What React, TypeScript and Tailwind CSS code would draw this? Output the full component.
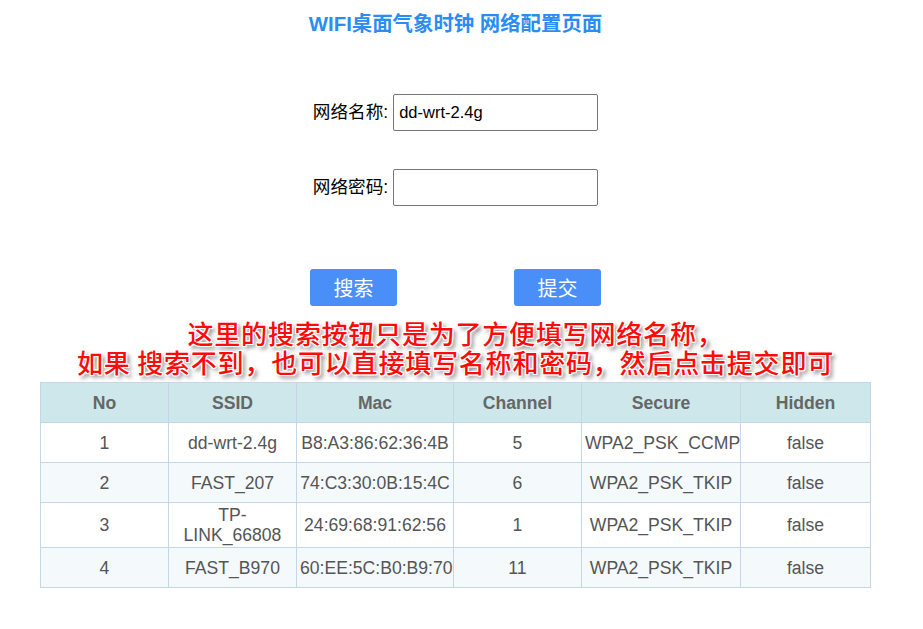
import React from "react";

const rows = [
  { no: "1", ssid: "dd-wrt-2.4g", mac: "B8:A3:86:62:36:4B", ch: "5", sec: "WPA2_PSK_CCMP", hid: "false" },
  { no: "2", ssid: "FAST_207", mac: "74:C3:30:0B:15:4C", ch: "6", sec: "WPA2_PSK_TKIP", hid: "false" },
  { no: "3", ssid: "TP-LINK_66808", mac: "24:69:68:91:62:56", ch: "1", sec: "WPA2_PSK_TKIP", hid: "false" },
  { no: "4", ssid: "FAST_B970", mac: "60:EE:5C:B0:B9:70", ch: "11", sec: "WPA2_PSK_TKIP", hid: "false" },
];

const headers = ["No", "SSID", "Mac", "Channel", "Secure", "Hidden"];
const widths = ["w-[128px]", "w-[128px]", "w-[157px]", "w-[128px]", "w-[159px]", "w-[130px]"];

export default function App() {
  return (
    <div className="w-[911px] min-h-[629px] bg-white flex flex-col items-center font-['Liberation_Sans','Noto_Sans_CJK_SC',sans-serif]">
      <h1 className="mt-[12px] text-[20.4px] leading-[24px] font-bold text-[#2a8df3]">
        WIFI桌面气象时钟 网络配置页面
      </h1>

      <div className="mt-[58px] flex items-center gap-[5px] h-[37px]">
        <label className="text-[17.6px] text-black">网络名称:</label>
        <input
          defaultValue="dd-wrt-2.4g"
          className="w-[205px] h-[37px] border border-[#767676] rounded-[2px] px-[5px] text-[16.5px] text-black outline-none font-['Liberation_Sans',sans-serif]"
        />
      </div>

      <div className="mt-[38px] flex items-center gap-[5px] h-[37px]">
        <label className="text-[17.6px] text-black">网络密码:</label>
        <input
          type="password"
          className="w-[205px] h-[37px] border border-[#767676] rounded-[2px] px-[5px] text-[16.5px] text-black outline-none"
        />
      </div>

      <div className="mt-[63px] flex gap-[117px]">
        <button className="w-[87px] h-[37px] bg-[#4a8ef8] rounded-[3px] text-white text-[20px] leading-[40px]">
          搜索
        </button>
        <button className="w-[87px] h-[37px] bg-[#4a8ef8] rounded-[3px] text-white text-[20px] leading-[40px]">
          提交
        </button>
      </div>

      <div className="mt-[12px] text-center text-[26px] leading-[29px] tracking-[0.8px] font-medium text-[#ff0a0a] font-['Noto_Sans_CJK_SC',sans-serif] [text-shadow:-1px_-1px_0_#fff,1px_-1px_0_#fff,-1px_1px_0_#fff,1px_1px_0_#fff,0_-1px_0_#fff,0_1px_0_#fff,-1px_0_0_#fff,1px_0_0_#fff,3px_3px_4px_rgba(0,0,0,0.55)]">
        <div>这里的搜索按钮只是为了方便填写网络名称，</div>
        <div>如果 搜索不到，也可以直接填写名称和密码，然后点击提交即可</div>
      </div>

      <table className="mt-[6px] w-[830px] border-collapse text-[17.6px] leading-[20px] table-fixed">
        <thead>
          <tr className="h-[40px] bg-[#cde7ea]">
            {headers.map((h, i) => (
              <th
                key={h}
                className={`${widths[i]} border border-[#c5d6ea] font-bold text-[#666666] text-center px-[3px] py-[2px]`}
              >
                {h}
              </th>
            ))}
          </tr>
        </thead>
        <tbody>
          {rows.map((r, idx) => (
            <tr key={r.no} className={`h-[40px] ${idx % 2 === 1 ? "bg-[#f4f9fb]" : "bg-white"}`}>
              {[r.no, r.ssid, r.mac, r.ch, r.sec, r.hid].map((v, i) => (
                <td
                  key={i}
                  className="border border-[#c5d6ea] text-[#555555] text-center px-[3px] py-[2px]"
                >
                  {v}
                </td>
              ))}
            </tr>
          ))}
        </tbody>
      </table>
    </div>
  );
}
